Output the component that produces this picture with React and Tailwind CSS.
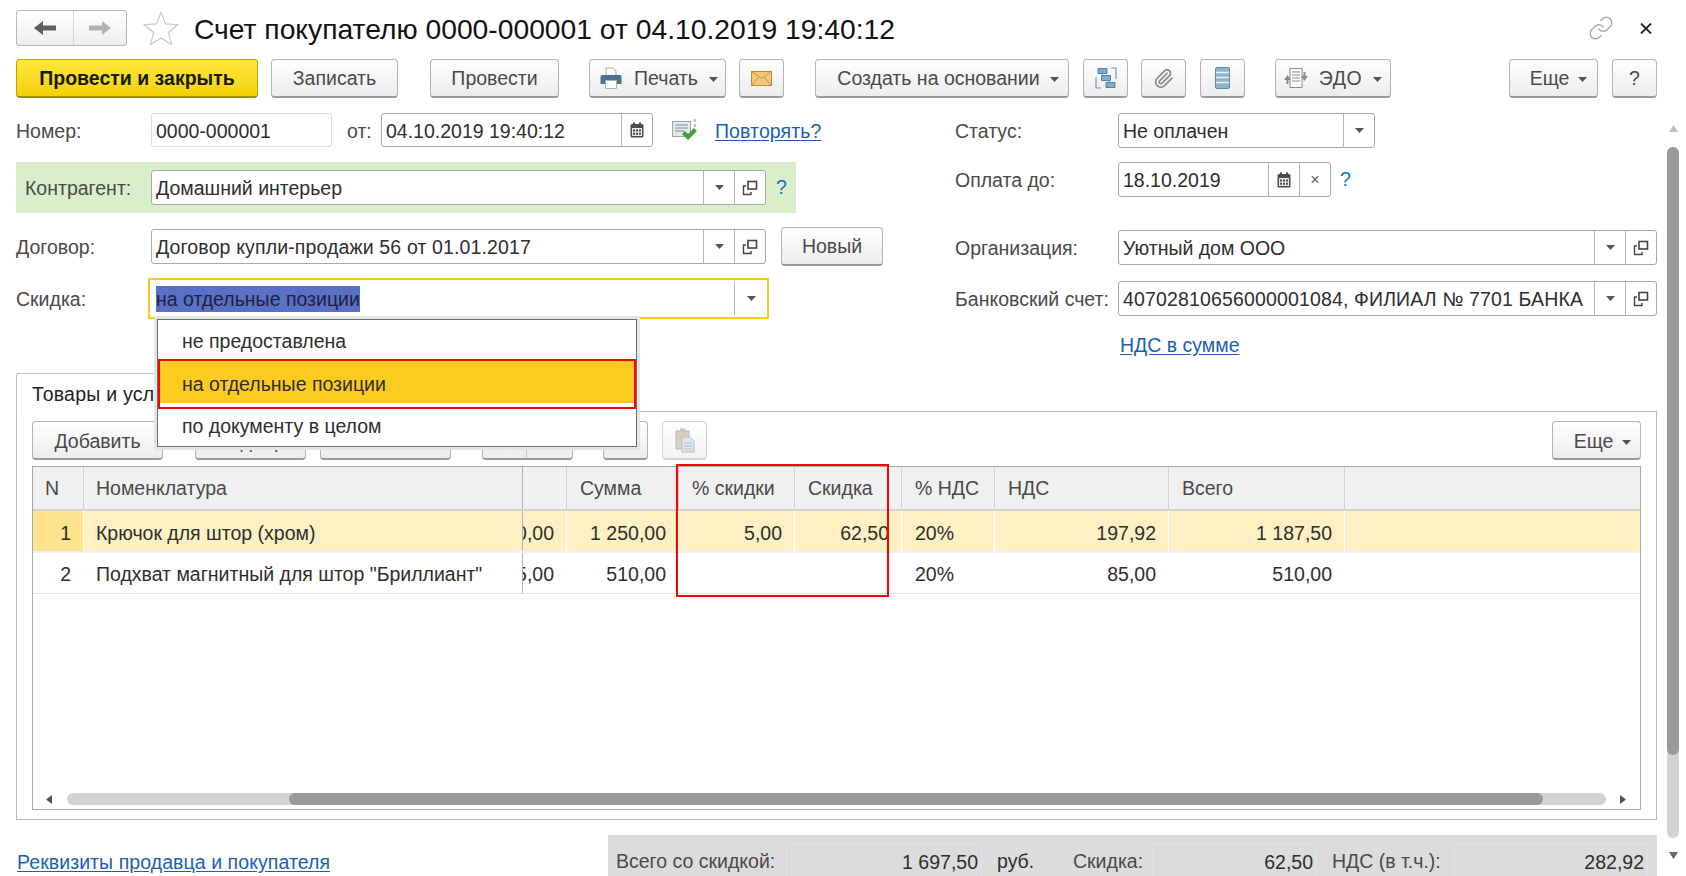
import { Link, Paperclip } from "lucide-react";

const btnBase = "flex items-center justify-center h-[39px] shrink-0 rounded-[4px] border border-[#b4b4b4] border-b-[2px] border-b-[#9a9a9a] bg-gradient-to-b from-white to-[#ececec] text-[#4a4a4a]";
const btn = `${btnBase} pt-[2px]`;
const panelBtn = `${btnBase} pt-[4px]`;

function Caret({ color = "#555" }) {
  return (
    <svg width="9" height="5" viewBox="0 0 9 5" className="shrink-0">
      <path d="M0 0h9L4.500 5z" fill={color} />
    </svg>
  );
}

function OpenIcon() {
  return (
    <svg width="16" height="16" viewBox="0 0 16 16" fill="none" stroke="#444" className="shrink-0">
      <rect x="6" y="1.500" width="8.500" height="7.500" strokeWidth="1.600" />
      <path d="M4 6H1.500v8.500H9V12" strokeWidth="1.400" />
    </svg>
  );
}

function Calendar() {
  return (
    <svg width="14" height="16" viewBox="0 0 14 16" className="shrink-0">
      <rect x="0.500" y="2" width="13" height="13.500" rx="1.500" fill="#4d4d4d" />
      <rect x="3" y="0.500" width="2" height="3" fill="#4d4d4d" />
      <rect x="9" y="0.500" width="2" height="3" fill="#4d4d4d" />
      <path d="M2 6h10v8H2z" fill="#e8e8e8" />
      <path d="M3 7.500h2v2H3zM6 7.500h2v2H6zM9 7.500h2v2H9zM3 10.700h2v2H3zM6 10.700h2v2H6zM9 10.700h2v2H9z" fill="#4d4d4d" />
    </svg>
  );
}

function Field({ text, width, parts = [], textClass = "" }) {
  return (
    <div className={`flex items-stretch h-[35px] bg-white rounded-[3px] border border-[#a8a8a8] shrink-0 ${width}`}>
      <div className={`flex-1 min-w-0 flex items-center pl-[4px] pt-[3px] text-[#2e2e2e] whitespace-nowrap overflow-hidden ${textClass}`}>{text}</div>
      {parts.map((p, i) => (
        <div key={i} className="w-[31px] flex items-center justify-center border-l border-[#b4b4b4] shrink-0">
          {p === "caret" && <Caret />}
          {p === "open" && <OpenIcon />}
          {p === "cal" && <Calendar />}
          {p === "x" && <span className="text-[#666] text-[16px] leading-none">×</span>}
        </div>
      ))}
    </div>
  );
}

function LeftLabel({ children }) {
  return <div className="w-[135px] shrink-0 pt-[3px] text-[#4a4a4a]">{children}</div>;
}

function RightLabel({ children }) {
  return <div className="w-[163px] shrink-0 pt-[3px] text-[#4a4a4a] whitespace-nowrap">{children}</div>;
}

function Header() {
  return (
    <div className="flex items-center h-[36px] mt-[10px]">
      <div className="flex w-[111px] h-[36px] rounded-[3px] border border-[#b8b8b8] bg-gradient-to-b from-white to-[#ededed]">
        <div className="w-[57px] flex items-center justify-center border-r border-[#d4d4d4]">
          <svg width="22" height="14" viewBox="0 0 22 14"><path d="M0 7l9-7v4.500h13v5H9V14z" fill="#5e5e5e" /></svg>
        </div>
        <div className="flex-1 flex items-center justify-center">
          <svg width="22" height="14" viewBox="0 0 22 14"><path d="M22 7l-9-7v4.500H0v5h13V14z" fill="#b2b2b2" /></svg>
        </div>
      </div>
      <svg width="36" height="34" viewBox="0 0 36 34" className="ml-[16px]" fill="#fff" stroke="#c8c8c8" strokeWidth="1.200">
        <path d="M18 1.500l4.600 11.400 12.300.8-9.500 7.800 3.100 12-10.500-6.600-10.500 6.600 3.100-12-9.500-7.800 12.300-.8z" />
      </svg>
      <h1 className="ml-[15px] pt-[2px] text-[28.250px] font-normal text-[#111] whitespace-nowrap">Счет покупателю 0000-000001 от 04.10.2019 19:40:12</h1>
      <Link size={26} strokeWidth={1.300} color="#a8a8a8" className="ml-auto" />
      <svg width="12" height="11" viewBox="0 0 12 11" className="ml-[26px] mr-[5px]" stroke="#222" strokeWidth="1.800"><path d="M1 .5l10 10M11 .5L1 10.500" /></svg>
    </div>
  );
}

function CommandBar() {
  return (
    <div className="flex items-center h-[39px] mt-[13px]">
      <button className="flex items-center justify-center w-[242px] h-[39px] pt-[2px] rounded-[4px] border border-[#bfa300] border-b-[2px] border-b-[#a08a10] bg-gradient-to-b from-[#ffe83a] to-[#f2d000] font-bold text-[#1a1a00]">Провести и закрыть</button>
      <button className={`${btn} w-[127px] ml-[13px]`}>Записать</button>
      <button className={`${btn} w-[129px] ml-[32px]`}>Провести</button>
      <button className={`${btn} w-[137px] ml-[30px] pl-[3px]`}>
        <svg width="22" height="22" viewBox="0 0 22 22" className="-mt-[2px]">
          <path d="M6 1h7l3 3v5H6z" fill="#fff" stroke="#a8a8a8" />
          <path d="M2 8h18a1.500 1.500 0 0 1 1.500 1.500V17H17v-3H5v3H.5V9.500A1.500 1.500 0 0 1 2 8z" fill="#4a7196" />
          <path d="M5.500 13.500h11v8h-11z" fill="#fff" stroke="#b0b0b0" />
        </svg>
        <span className="ml-[12px]">Печать</span>
        <span className="ml-[11px]"><Caret /></span>
      </button>
      <button className={`${btn} w-[45px] ml-[13px]`}>
        <svg width="21" height="15" viewBox="0 0 21 15" className="-mt-[2px]">
          <rect x="0.500" y="0.500" width="20" height="14" fill="#f2c97c" stroke="#c98a36" />
          <path d="M.5.500l10 7 10-7M.5 14.500l7-8M20.500 14.500l-7-8" fill="none" stroke="#c98a36" />
        </svg>
      </button>
      <button className={`${btn} w-[254px] ml-[31px] pl-[12px]`}>
        <span>Создать на основании</span>
        <span className="ml-[10px]"><Caret /></span>
      </button>
      <button className={`${btn} w-[45px] ml-[14px]`}>
        <svg width="22" height="22" viewBox="0 0 22 22" className="-mt-[2px]">
          <path d="M1 10v11h5M16 1h5v11" fill="none" stroke="#6a9cc0" strokeWidth="1.200" />
          <path d="M7 6.500v2M14 13.500v2" stroke="#4f83a8" />
          <path d="M3 1.500h9v5H3zM6.500 8.500h9v5h-9zM11 15.500h9v5h-9z" fill="#7fadcf" stroke="#4f83a8" />
        </svg>
      </button>
      <button className={`${btn} w-[45px] ml-[13px]`}>
        <Paperclip size={21} strokeWidth={2} color="#8a8a8a" className="-mt-[2px]" />
      </button>
      <button className={`${btn} w-[45px] ml-[14px]`}>
        <svg width="15" height="22" viewBox="0 0 15 22" className="-mt-[2px]">
          <rect x="0.500" y="0.500" width="14" height="21" rx="1.500" fill="#8fb4cf" stroke="#5e89a8" />
          <path d="M1 5.500h13M1 10.500h13M1 15.500h13" stroke="#eaf2f7" strokeWidth="1.500" />
        </svg>
      </button>
      <button className={`${btn} w-[116px] ml-[30px]`}>
        <svg width="24" height="22" viewBox="0 0 24 22" className="-mt-[2px]">
          <path d="M6 1.500h12v19H6z" fill="#fff" stroke="#8c8c8c" />
          <path d="M8 5h8M8 8h8M8 11h8M8 14h8" stroke="#8c8c8c" />
          <path d="M3.500 8L0 13h2.500v4h2v-4H7z" fill="#8c8c8c" />
          <path d="M20.500 14l3.500-5h-2.500V5h-2v4H17z" fill="#8c8c8c" />
        </svg>
        <span className="ml-[11px] tracking-[0.6px]">ЭДО</span>
        <span className="ml-[11px]"><Caret /></span>
      </button>
      <button className={`${btn} w-[89px] ml-auto pl-[10px]`}>
        <span>Еще</span>
        <span className="ml-[9px]"><Caret /></span>
      </button>
      <button className={`${btn} w-[45px] ml-[14px]`}>?</button>
    </div>
  );
}

function FormArea() {
  return (
    <div className="flex h-[260px] mt-[15px]">
      <div className="w-[939px] shrink-0 flex flex-col">
        <div className="flex items-center h-[34px]">
          <LeftLabel>Номер:</LeftLabel>
          <div className="flex items-center w-[181px] h-[34px] pl-[4px] pt-[3px] rounded-[3px] border border-[#dcdcdc] text-[#2e2e2e]">0000-000001</div>
          <span className="ml-[15px] w-[34px] pt-[3px] text-[#4a4a4a]">от:</span>
          <div className="flex items-stretch w-[272px] h-[34px] rounded-[3px] border border-[#a8a8a8]">
            <div className="flex-1 flex items-center pl-[4px] pt-[3px] text-[#2e2e2e]">04.10.2019 19:40:12</div>
            <div className="w-[31px] flex items-center justify-center border-l border-[#b4b4b4]"><Calendar /></div>
          </div>
          <svg width="26" height="23" viewBox="0 0 26 23" className="ml-[19px]">
            <rect x="0.500" y="2.500" width="18" height="15" fill="#e4e9ee" stroke="#9aa6b0" />
            <path d="M3 6h13M3 9h13M3 12h9" stroke="#7d8a96" />
            <path d="M10 15l3-3 3 3 6-6 3 3-9 9z" fill="#3aa535" />
            <path d="M23 0v3M23 5v3" stroke="#e05050" />
          </svg>
          <a className="ml-[17px] pt-[3px] text-[#1a5fb4] underline underline-offset-2 tracking-[0.1px]">Повторять?</a>
        </div>

        <div className="flex items-center w-[780px] h-[51px] mt-[15px] pl-[9px] bg-[#d9efcb]">
          <div className="w-[126px] shrink-0 pt-[3px] text-[#4a4a4a]">Контрагент:</div>
          <Field text="Домашний интерьер" width="w-[615px]" parts={["caret", "open"]} />
          <span className="ml-[10px] text-[#0a78c2]">?</span>
        </div>

        <div className="flex items-center h-[39px] mt-[14px]">
          <LeftLabel>Договор:</LeftLabel>
          <Field text="Договор купли-продажи 56 от 01.01.2017" width="w-[615px]" parts={["caret", "open"]} textClass="tracking-[0.14px]" />
          <button className={`${btn} w-[102px] ml-[15px]`}>Новый</button>
        </div>

        <div className="flex items-center h-[41px] mt-[12px]">
          <div className="w-[132px] shrink-0 pt-[3px] text-[#4a4a4a]">Скидка:</div>
          <div className="flex items-center w-[621px] h-[41px] border-2 border-[#fbca1f] pl-[6px]">
            <span className="flex-1 pt-[2px]"><span className="bg-[#5a6fc6] text-[#20223a] py-[2px]">на отдельные позиции</span></span>
            <div className="flex items-center justify-center w-[33px] h-[33px] border-l border-[#b4b4b4]"><Caret /></div>
          </div>
        </div>
      </div>

      <div className="flex-1 flex flex-col">
        <div className="flex items-center h-[34px]">
          <RightLabel>Статус:</RightLabel>
          <Field text="Не оплачен" width="w-[257px]" parts={["caret"]} />
        </div>
        <div className="flex items-center h-[35px] mt-[15px]">
          <RightLabel>Оплата до:</RightLabel>
          <Field text="18.10.2019" width="w-[213px]" parts={["cal", "x"]} />
          <span className="ml-[9px] text-[#0a78c2]">?</span>
        </div>
        <div className="flex items-center h-[35px] mt-[33px]">
          <RightLabel>Организация:</RightLabel>
          <Field text="Уютный дом ООО" width="w-[539px]" parts={["caret", "open"]} />
        </div>
        <div className="flex items-center h-[35px] mt-[16px]">
          <RightLabel>Банковский счет:</RightLabel>
          <Field text="40702810656000001084, ФИЛИАЛ № 7701 БАНКА" width="w-[539px]" parts={["caret", "open"]} textClass="tracking-[0.15px]" />
        </div>
        <a className="block ml-[165px] mt-[20px] text-[#1a5fb4] underline underline-offset-2">НДС в сумме</a>
      </div>
    </div>
  );
}

const cols = "grid grid-cols-[51px_439px_44px_112px_116px_107px_93px_174px_176px_1fr]";

const rows = [
  { n: "1", name: "Крючок для штор (хром)", price: "250,00", sum: "1 250,00", pct: "5,00", disc: "62,50", vat: "20%", vatSum: "197,92", total: "1 187,50" },
  { n: "2", name: 'Подхват магнитный для штор "Бриллиант"', price: "85,00", sum: "510,00", pct: "", disc: "", vat: "20%", vatSum: "85,00", total: "510,00" },
];

function GoodsTable() {
  return (
    <div className="relative flex flex-col h-[344px] mt-[6px] border border-[#a8a8a8]">
      <div className={`${cols} h-[44px] bg-[#f0f0f0] border-b-2 border-[#d4d4d4] text-[#4a4a4a]`}>
        {["N", "Номенклатура", "", "Сумма", "% скидки", "Скидка", "% НДС", "НДС", "Всего", ""].map((h, i) => (
          <div key={i} className={`flex items-center pt-[2px] border-r last:border-r-0 ${i < 2 ? "pl-[12px]" : "pl-[13px]"} ${i === 1 ? "border-[#b4b4b4]" : "border-[#d0d0d0]"}`}>{h}</div>
        ))}
      </div>
      {rows.map((r, idx) => {
        const bg = idx === 0 ? "bg-[#fdf1c3]" : "bg-white";
        const cell = `flex items-center justify-end pr-[12px] overflow-hidden whitespace-nowrap text-[#2e2e2e] border-r ${idx === 0 ? "pt-[5px] border-white" : "pt-[3px] border-transparent"}`;
        return (
          <div key={r.n} className={`${cols} ${idx === 0 ? "h-[42px] border-b-2 border-[#f0f0f0]" : "h-[41px] border-b border-[#e2e2e2]"}`}>
            <div className={`${cell} ${idx === 0 ? "bg-[#ffe38f]" : "bg-white"}`}>{r.n}</div>
            <div className={`flex items-center pl-[12px] whitespace-nowrap overflow-hidden text-[#2e2e2e] border-r border-[#b4b4b4] ${idx === 0 ? "pt-[5px]" : "pt-[3px]"} ${bg}`}>{r.name}</div>
            <div className={`${cell} ${bg}`}>{r.price}</div>
            <div className={`${cell} ${bg}`}>{r.sum}</div>
            <div className={`${cell} ${bg}`}>{r.pct}</div>
            <div className={`${cell} ${bg}`}>{r.disc}</div>
            <div className={`flex items-center pl-[13px] text-[#2e2e2e] border-r ${idx === 0 ? "pt-[5px] border-white" : "pt-[3px] border-transparent"} ${bg}`}>{r.vat}</div>
            <div className={`${cell} ${bg}`}>{r.vatSum}</div>
            <div className={`${cell} ${bg}`}>{r.total}</div>
            <div className={bg} />
          </div>
        );
      })}
      <div className="flex items-center h-[12px] mt-auto mb-[4px] pl-[13px] pr-[14px]">
        <svg width="6" height="9" viewBox="0 0 6 9"><path d="M6 0v9L0 4.500z" fill="#555" /></svg>
        <div className="flex-1 flex h-[12px] ml-[15px] mr-[14px] rounded-[6px] bg-[#d2d2d2]">
          <div className="w-[222px]" />
          <div className="w-[1254px] h-[12px] rounded-[6px] bg-[#9a9a9a]" />
        </div>
        <svg width="6" height="9" viewBox="0 0 6 9"><path d="M0 0v9l6-4.500z" fill="#555" /></svg>
      </div>
      {/* red frame around the discount columns */}
      <div className="absolute left-[643px] top-[-3px] w-[213px] h-[133px] border-2 border-[#ff0000] pointer-events-none" />
    </div>
  );
}

function TabPanel() {
  return (
    <div className="flex flex-col h-[447px]">
      <div className="flex h-[39px]">
        <div className="flex items-center w-[200px] pl-[15px] pt-[3px] rounded-t-[3px] border border-b-0 border-[#c0c0c0] text-[#222] whitespace-nowrap tracking-[0.25px]">Товары и услуги</div>
        <div className="flex-1 border-b border-[#b8b8b8]" />
      </div>
      <div className="flex-1 flex flex-col px-[15px] pt-[9px] border border-t-0 border-[#b8b8b8]">
        <div className="flex h-[39px]">
          <button className={`${panelBtn} w-[131px]`}>Добавить</button>
          <button className={`${panelBtn} w-[111px] ml-[32px]`}>Подбор</button>
          <button className={`${panelBtn} w-[131px] ml-[14px]`} />
          <div className={`${panelBtn} w-[91px] ml-[31px]`}>
            <div className="w-[44px] h-full border-r border-[#c8c8c8]" />
            <div className="flex-1" />
          </div>
          <button className={`${panelBtn} w-[45px] ml-[30px]`} />
          <button className="flex items-center justify-center w-[45px] h-[39px] ml-[14px] rounded-[4px] border border-[#d4d4d4] border-b-[2px] bg-gradient-to-b from-white to-[#f2f2f2]">
            <svg width="20" height="26" viewBox="0 0 20 26">
              <path d="M1 4h13v18H1z" fill="#d8cfc4" stroke="#c0b8ac" />
              <path d="M5 1.500h5v4H5z" fill="#c4c4c4" />
              <path d="M7 10h8l4 4v11H7z" fill="#dfe5ea" stroke="#b8c0c8" />
              <path d="M9 16h8M9 19h8M9 22h8" stroke="#b8c0c8" />
            </svg>
          </button>
          <button className={`${panelBtn} w-[89px] ml-auto pl-[12px]`}>
            <span>Еще</span>
            <span className="ml-[9px]"><Caret /></span>
          </button>
        </div>
        <GoodsTable />
      </div>
    </div>
  );
}

function FooterBar() {
  const box = "flex items-center justify-end h-[33px] pt-[5px] border border-b-0 border-[#e3e3e3] text-[#2e2e2e]";
  const lbl = "flex items-center h-[33px] pt-[5px] shrink-0 whitespace-nowrap";
  return (
    <div className="flex items-end h-[41px] mt-[15px] overflow-hidden">
      <a className="ml-[1px] mb-[4px] text-[#1a5fb4] underline underline-offset-2 tracking-[0.07px]">Реквизиты продавца и покупателя</a>
      <div className="ml-auto flex items-end w-[1049px] h-[41px] pl-[8px] bg-[#dcdcdc] text-[#4a4a4a]">
        <span className={`${lbl} w-[170px]`}>Всего со скидкой:</span>
        <div className={`${box} w-[196px] pr-[3px]`}>1 697,50</div>
        <span className={`${lbl} w-[91px] pl-[15px] text-[#2e2e2e]`}>руб.</span>
        <span className={`${lbl} w-[79px]`}>Скидка:</span>
        <div className={`${box} w-[164px] pr-[2px]`}>62,50</div>
        <span className={`${lbl} w-[138px] pl-[16px]`}>НДС (в т.ч.):</span>
        <div className={`${box} w-[194px] pr-[3px]`}>282,92</div>
      </div>
    </div>
  );
}

function DiscountMenu() {
  return (
    <div className="absolute left-[154px] top-[316px] w-[486px] h-[134px] border-[3px] border-[#e4e4e4] z-10">
      <div className="flex flex-col h-full bg-white border border-[#6e6e6e] text-[#2e2e2e]">
        <div className="flex items-center h-[39px] pl-[24px] pt-[5px] shrink-0">не предоставлена</div>
        <div className="h-[50px] border-2 border-[#ff0000] bg-white shrink-0">
          <div className="flex items-center h-[42px] pl-[22px] pt-[5px] bg-[#fbcb1f]">на отдельные позиции</div>
        </div>
        <div className="flex items-center flex-1 pl-[24px] pb-[2px]">по документу в целом</div>
      </div>
    </div>
  );
}

export default function App() {
  return (
    <div className="relative flex w-[1686px] h-[876px] overflow-hidden bg-white font-['Liberation_Sans',Arial,sans-serif] text-[19.500px] leading-none">
      <main className="w-[1660px] shrink-0 pl-[16px] pr-[3px]">
        <Header />
        <CommandBar />
        <FormArea />
        <TabPanel />
        <FooterBar />
      </main>
      <div className="flex-1 flex flex-col items-center pt-[125px]">
        <svg width="9" height="7" viewBox="0 0 9 7"><path d="M4.500 0L9 7H0z" fill="#bdbdbd" /></svg>
        <div className="w-[12px] h-[691px] mt-[15px] rounded-[6px] bg-[#d2d2d2]">
          <div className="h-[608px] rounded-[6px] bg-[#9a9a9a]" />
        </div>
        <svg width="9" height="7" viewBox="0 0 9 7" className="mt-[14px]"><path d="M0 0h9L4.500 7z" fill="#666" /></svg>
      </div>
      <DiscountMenu />
    </div>
  );
}
